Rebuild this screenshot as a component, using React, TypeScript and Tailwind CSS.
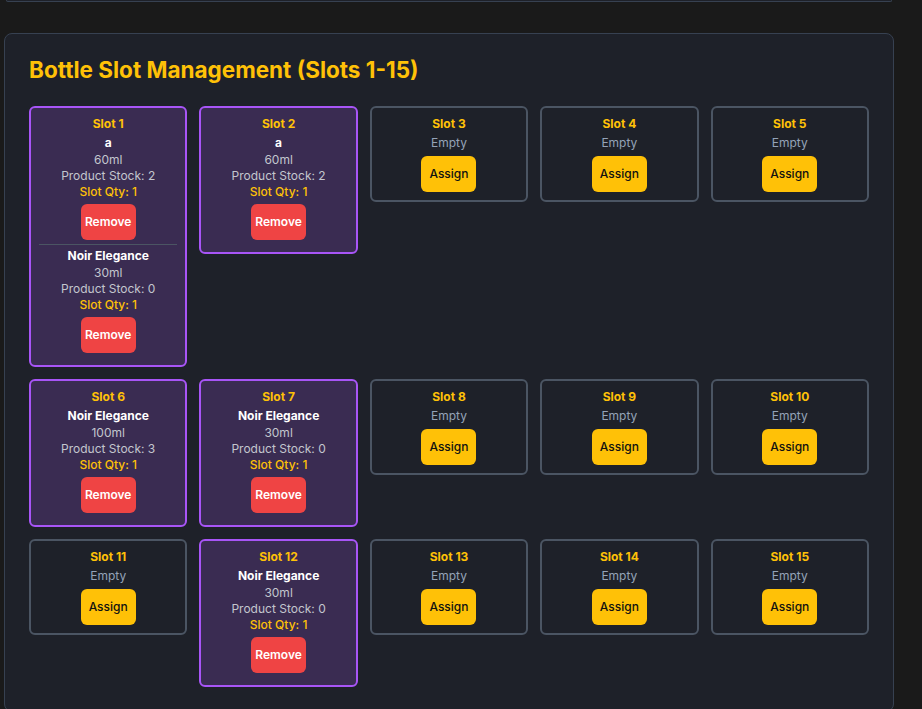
type Item = {
  name: string;
  size: string;
  stock: number;
  qty: number;
};

type Slot = {
  id: number;
  items: Item[];
};

const noir = (size: string, stock: number): Item => ({
  name: "Noir Elegance",
  size,
  stock,
  qty: 1,
});

const slots: Slot[] = Array.from({ length: 15 }, (_, i) => ({
  id: i + 1,
  items: [],
}));
slots[0].items = [{ name: "a", size: "60ml", stock: 2, qty: 1 }, noir("30ml", 0)];
slots[1].items = [{ name: "a", size: "60ml", stock: 2, qty: 1 }];
slots[5].items = [noir("100ml", 3)];
slots[6].items = [noir("30ml", 0)];
slots[11].items = [noir("30ml", 0)];

function SlotCard({ slot }: { slot: Slot }) {
  const filled = slot.items.length > 0;

  return (
    <div
      className={
        filled
          ? "rounded-md border-2 border-[#a855f7] bg-[#3a2c52] p-2 text-center"
          : "rounded-md border-2 border-[#4b5563] bg-[#1e2129] p-2 text-center"
      }
    >
      <p className="text-xs leading-4 font-bold text-[#ffc107]">Slot {slot.id}</p>

      {filled ? (
        slot.items.map((item, idx) => (
          <div
            key={idx}
            className={
              idx < slot.items.length - 1
                ? "pt-[3px] pb-1 border-b border-[#4b5563]"
                : "pt-[3px] pb-1"
            }
          >
            <p className="mb-px text-xs leading-4 font-bold text-white">{item.name}</p>
            <p className="text-xs leading-4 text-[#c3c6ce]">{item.size}</p>
            <p className="text-xs leading-4 text-[#c3c6ce]">Product Stock: {item.stock}</p>
            <p className="text-xs leading-4 font-medium text-[#ffc107]">Slot Qty: {item.qty}</p>
            <button className="mt-1 w-[55px] rounded-md bg-[#ef4444] py-[10px] text-xs leading-4 font-semibold text-white">
              Remove
            </button>
          </div>
        ))
      ) : (
        <>
          <p className="mt-[3px] text-xs leading-4 text-[#94a3b8]">Empty</p>
          <button className="mt-[5px] w-[55px] rounded-md bg-[#ffc107] py-[10px] text-xs leading-4 font-medium text-[#111111]">
            Assign
          </button>
        </>
      )}
    </div>
  );
}

export default function App() {
  return (
    <div className="min-h-screen bg-[#1a1a1a] font-['Inter',sans-serif]">
      {/* bottom edge of the section above */}
      <div className="ml-[6px] w-[886px] h-[2px] rounded-b-lg border-b border-x border-[#374151] bg-[#1e2129]" />

      <div className="ml-1 mt-[31px] w-[890px] rounded-lg border border-[#374151] bg-[#1e2129] p-6">
        <h2 className="mb-6 text-[22.5px] leading-6 font-bold text-[#ffc107]">
          Bottle Slot Management (Slots 1-15)
        </h2>

        <div className="grid grid-cols-5 items-start gap-3">
          {slots.map((slot) => (
            <SlotCard key={slot.id} slot={slot} />
          ))}
        </div>
      </div>
    </div>
  );
}
